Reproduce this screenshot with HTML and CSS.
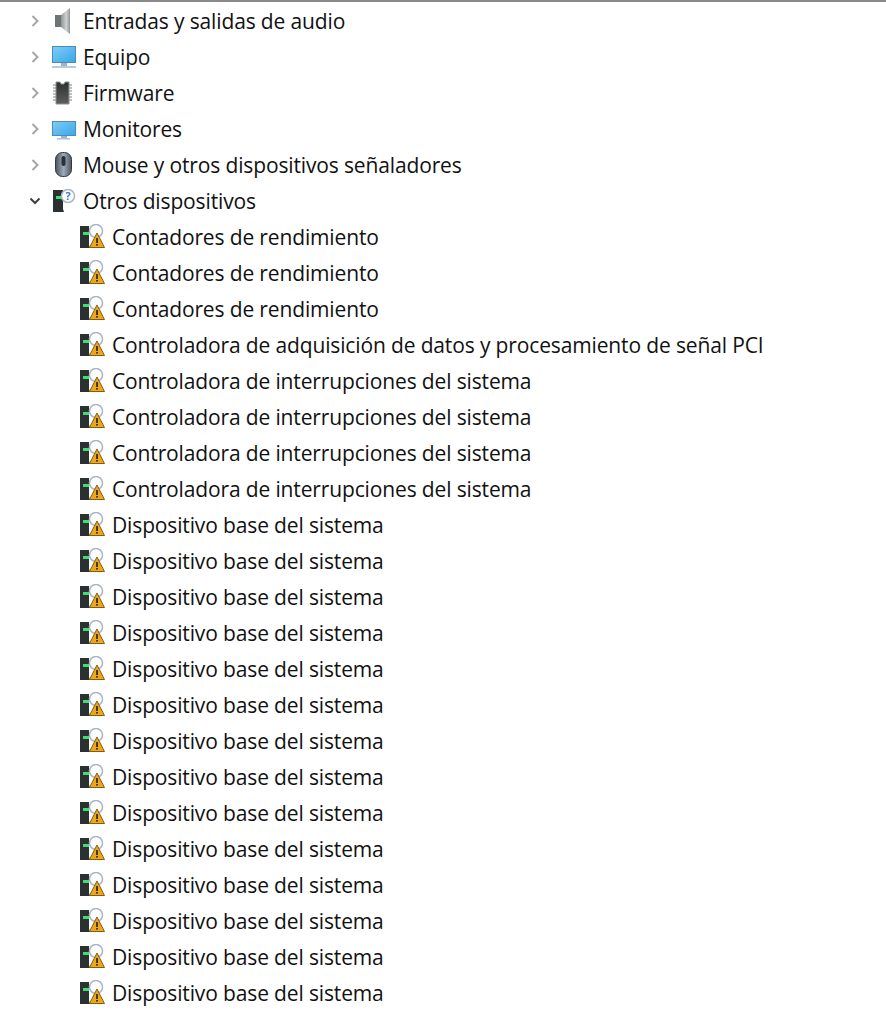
FILE: index.html
```html
<!DOCTYPE html>
<html lang="es">
<head>
    <meta charset="UTF-8">
    <meta name="viewport" content="width=device-width, initial-scale=1.0">
    <title>Administrador de dispositivos</title>
    <link rel="stylesheet" href="styles.css">
</head>
<body>
	<svg class="defs" width="0" height="0">
		<defs>
			<linearGradient id="screen" x1="0" y1="0" x2="1" y2="1">
				<stop offset="0" stop-color="#7fcdf5"/>
				<stop offset="1" stop-color="#3aa6e8"/>
			</linearGradient>
			<linearGradient id="cone" x1="0" y1="0" x2="1" y2="0">
				<stop offset="0" stop-color="#8e9494"/>
				<stop offset="0.6" stop-color="#cfd2d2"/>
				<stop offset="1" stop-color="#8f9393"/>
			</linearGradient>
			<linearGradient id="body" x1="0" y1="0" x2="1" y2="0">
				<stop offset="0" stop-color="#4a535c"/>
				<stop offset="0.5" stop-color="#9aabbc"/>
				<stop offset="1" stop-color="#4f5a64"/>
			</linearGradient>
			<linearGradient id="chip" x1="0" y1="0" x2="0" y2="1">
				<stop offset="0" stop-color="#2e3030"/>
				<stop offset="1" stop-color="#5c5e5e"/>
			</linearGradient>
			<symbol id="warn" viewBox="0 0 26 26">
				<path d="M0 2h9v19l1 3H0z" fill="#2b3032"/>
				<rect x="3" y="8" width="6" height="3" fill="#3fe06a"/>
				<circle cx="16" cy="7" r="6.500" fill="#fff" stroke="#a9b6c4" stroke-width="1.500"/>
				<path d="M17 9L24.500 23.500H9.500z" fill="#eba81c" stroke="#8a5a10"/>
				<rect x="16.200" y="14" width="1.600" height="5" fill="#2a1c08"/>
				<rect x="16.200" y="20" width="1.600" height="1.600" fill="#2a1c08"/>
			</symbol>
		</defs>
	</svg>

	<div class="tree">
		<div class="row">
			<svg class="arrow" viewBox="0 0 10 12"><path d="M2.500 1L7.500 6l-5 5"/></svg>
			<svg class="icon" viewBox="0 0 26 26">
				<rect x="4" y="7" width="6" height="12" fill="#6f7575"/>
				<path d="M10 7l9-7v26l-9-7z" fill="url(#cone)"/>
			</svg>
			<span>Entradas y salidas de audio</span>
		</div>
		<div class="row">
			<svg class="arrow" viewBox="0 0 10 12"><path d="M2.500 1L7.500 6l-5 5"/></svg>
			<svg class="icon" viewBox="0 0 26 26">
				<rect x="1.500" y="2.500" width="23" height="16" fill="url(#screen)" stroke="#4a8db8"/>
				<rect x="10" y="19" width="6" height="3" fill="#9fb4c2"/>
				<rect x="1" y="22" width="24" height="2" fill="#b4cddd"/>
			</svg>
			<span>Equipo</span>
		</div>
		<div class="row">
			<svg class="arrow" viewBox="0 0 10 12"><path d="M2.500 1L7.500 6l-5 5"/></svg>
			<svg class="icon" viewBox="0 0 26 26">
				<path d="M2 5h3M2 8h3M2 11h3M2 14h3M2 17h3M2 20h3M18 5h3M18 8h3M18 11h3M18 14h3M18 17h3M18 20h3" stroke="#a8acac" stroke-width="1.500"/>
				<path d="M5 2h4l1 2h3l1-2h4v22H5z" fill="url(#chip)" stroke="#8d9090"/>
			</svg>
			<span>Firmware</span>
		</div>
		<div class="row">
			<svg class="arrow" viewBox="0 0 10 12"><path d="M2.500 1L7.500 6l-5 5"/></svg>
			<svg class="icon" viewBox="0 0 26 26">
				<rect x="1.500" y="5.500" width="23" height="14" fill="url(#screen)" stroke="#4a8db8"/>
				<rect x="10" y="20" width="6" height="2" fill="#9fb4c2"/>
				<rect x="6" y="22" width="13" height="1.500" fill="#a9c4d6"/>
			</svg>
			<span>Monitores</span>
		</div>
		<div class="row">
			<svg class="arrow" viewBox="0 0 10 12"><path d="M2.500 1L7.500 6l-5 5"/></svg>
			<svg class="icon" viewBox="0 0 26 26">
				<rect x="4.500" y="0.500" width="16" height="24" rx="7" fill="url(#body)" stroke="#30363c"/>
				<rect x="10.500" y="4" width="4" height="10" rx="2" fill="#2a3036"/>
			</svg>
			<span>Mouse y otros dispositivos señaladores</span>
		</div>
		<div class="row">
			<svg class="arrow open" viewBox="0 0 12 10"><path d="M1.500 2.500L6 7l4.500-4.500"/></svg>
			<svg class="icon" viewBox="0 0 26 26">
				<path d="M2 2h10v19l1 3H2z" fill="#2b3032"/>
				<rect x="5" y="8" width="7" height="3" fill="#3fe06a"/>
				<circle cx="17" cy="8" r="6.500" fill="#fff" stroke="#a9b6c4" stroke-width="1.500"/>
				<text class="qmark" x="17" y="12">?</text>
			</svg>
			<span>Otros dispositivos</span>
		</div>

		<div class="row child"><svg class="icon"><use href="#warn"/></svg><span>Contadores de rendimiento</span></div>
		<div class="row child"><svg class="icon"><use href="#warn"/></svg><span>Contadores de rendimiento</span></div>
		<div class="row child"><svg class="icon"><use href="#warn"/></svg><span>Contadores de rendimiento</span></div>
		<div class="row child"><svg class="icon"><use href="#warn"/></svg><span>Controladora de adquisición de datos y procesamiento de señal PCI</span></div>
		<div class="row child"><svg class="icon"><use href="#warn"/></svg><span>Controladora de interrupciones del sistema</span></div>
		<div class="row child"><svg class="icon"><use href="#warn"/></svg><span>Controladora de interrupciones del sistema</span></div>
		<div class="row child"><svg class="icon"><use href="#warn"/></svg><span>Controladora de interrupciones del sistema</span></div>
		<div class="row child"><svg class="icon"><use href="#warn"/></svg><span>Controladora de interrupciones del sistema</span></div>
		<div class="row child"><svg class="icon"><use href="#warn"/></svg><span>Dispositivo base del sistema</span></div>
		<div class="row child"><svg class="icon"><use href="#warn"/></svg><span>Dispositivo base del sistema</span></div>
		<div class="row child"><svg class="icon"><use href="#warn"/></svg><span>Dispositivo base del sistema</span></div>
		<div class="row child"><svg class="icon"><use href="#warn"/></svg><span>Dispositivo base del sistema</span></div>
		<div class="row child"><svg class="icon"><use href="#warn"/></svg><span>Dispositivo base del sistema</span></div>
		<div class="row child"><svg class="icon"><use href="#warn"/></svg><span>Dispositivo base del sistema</span></div>
		<div class="row child"><svg class="icon"><use href="#warn"/></svg><span>Dispositivo base del sistema</span></div>
		<div class="row child"><svg class="icon"><use href="#warn"/></svg><span>Dispositivo base del sistema</span></div>
		<div class="row child"><svg class="icon"><use href="#warn"/></svg><span>Dispositivo base del sistema</span></div>
		<div class="row child"><svg class="icon"><use href="#warn"/></svg><span>Dispositivo base del sistema</span></div>
		<div class="row child"><svg class="icon"><use href="#warn"/></svg><span>Dispositivo base del sistema</span></div>
		<div class="row child"><svg class="icon"><use href="#warn"/></svg><span>Dispositivo base del sistema</span></div>
		<div class="row child"><svg class="icon"><use href="#warn"/></svg><span>Dispositivo base del sistema</span></div>
		<div class="row child"><svg class="icon"><use href="#warn"/></svg><span>Dispositivo base del sistema</span></div>
	</div>
</body>
</html>
```

FILE: styles.css
```css
body{
	margin: 0;
	padding: 0;
	background: #fff;
	color: #111;
	font-family: "Open Sans", "Noto Sans", sans-serif;
	font-size: 21px;
	letter-spacing: -0.14px;
}
.defs{
	display: block;
	height: 0;
}
.tree{
	border-top: 2px solid #8a8a8a;
	padding-top: 1px;
	height: 1014px;
	overflow: hidden;
}
.row{
	display: flex;
	align-items: center;
	height: 36px;
	padding-left: 30px;
	white-space: nowrap;
}
.row span{
	margin-left: 6px;
}
.child{
	padding-left: 80px;
}
.arrow{
	width: 10px;
	height: 12px;
	margin-right: 11px;
	fill: none;
	stroke: #a6a6a6;
	stroke-width: 2;
}
.open{
	width: 12px;
	height: 10px;
	margin-left: -1px;
	margin-right: 10px;
	stroke: #404040;
}
.icon{
	width: 26px;
	height: 26px;
	filter: blur(0.4px);
}
.qmark{
	font-size: 11px;
	font-weight: 700;
	fill: #3f78c0;
	text-anchor: middle;
}
```
